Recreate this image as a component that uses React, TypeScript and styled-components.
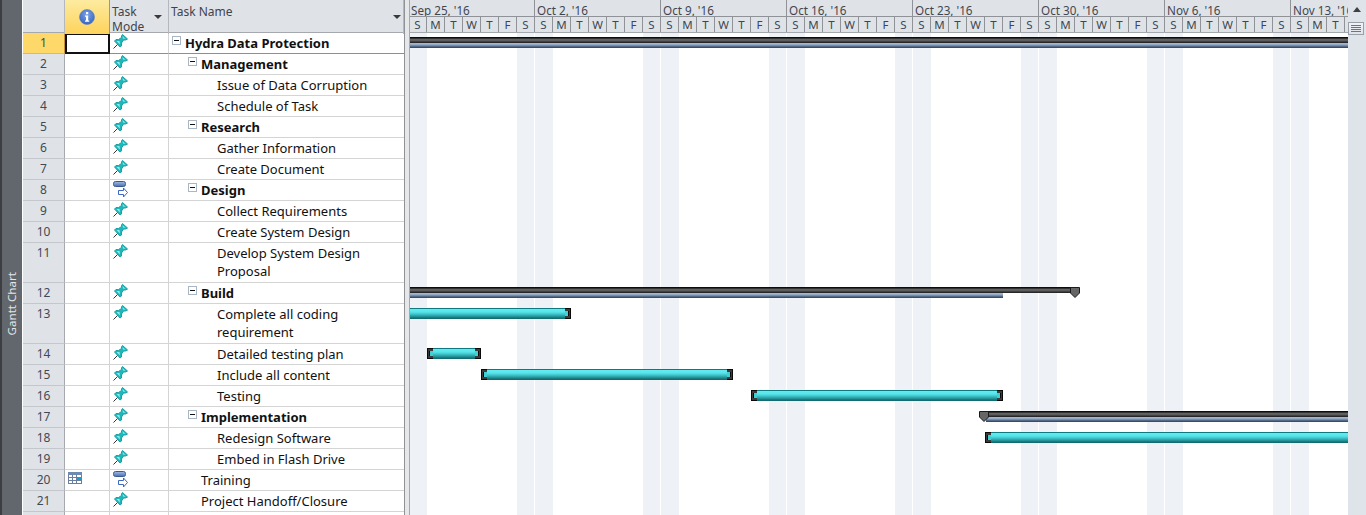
import styled, { createGlobalStyle } from "styled-components";

const GlobalStyle = createGlobalStyle`
  html, body {
    margin: 0;
    height: 100%;
    overflow: hidden;
    background: #fff;
  }
  #root {
    height: 100%;
  }
`;

type TaskRow = {
  id: number;
  name: string;
  level: number;
  summary?: boolean;
  tall?: boolean;
  auto?: boolean;
  calendar?: boolean;
  bold?: boolean;
};

const rows: TaskRow[] = [
  { id: 1, name: "Hydra Data Protection", level: 0, summary: true, bold: true },
  { id: 2, name: "Management", level: 1, summary: true, bold: true },
  { id: 3, name: "Issue of Data Corruption", level: 2 },
  { id: 4, name: "Schedule of Task", level: 2 },
  { id: 5, name: "Research", level: 1, summary: true, bold: true },
  { id: 6, name: "Gather Information", level: 2 },
  { id: 7, name: "Create Document", level: 2 },
  { id: 8, name: "Design", level: 1, summary: true, bold: true, auto: true },
  { id: 9, name: "Collect Requirements", level: 2 },
  { id: 10, name: "Create System Design", level: 2 },
  { id: 11, name: "Develop System Design Proposal", level: 2, tall: true },
  { id: 12, name: "Build", level: 1, summary: true, bold: true },
  { id: 13, name: "Complete all coding requirement", level: 2, tall: true },
  { id: 14, name: "Detailed testing plan", level: 2 },
  { id: 15, name: "Include all content", level: 2 },
  { id: 16, name: "Testing", level: 2 },
  { id: 17, name: "Implementation", level: 1, summary: true, bold: true },
  { id: 18, name: "Redesign Software", level: 2 },
  { id: 19, name: "Embed in Flash Drive", level: 2 },
  { id: 20, name: "Training", level: 1, auto: true, calendar: true },
  { id: 21, name: "Project Handoff/Closure", level: 1 },
  { id: 22, name: "", level: 1 },
];

const weeks = [
  "Sep 25, '16",
  "Oct 2, '16",
  "Oct 9, '16",
  "Oct 16, '16",
  "Oct 23, '16",
  "Oct 30, '16",
  "Nov 6, '16",
  "Nov 13, '16",
];
const dayLetters = ["S", "M", "T", "W", "T", "F", "S"];

const UI_FONT = `"Noto Sans", "Open Sans", "Liberation Sans", sans-serif`;
const COLUMNS = "42px 45px 59px 235px";

const Page = styled.div`
  display: flex;
  width: 1366px;
  height: 515px;
  overflow: hidden;
  font-family: ${UI_FONT};
  font-size: 13px;
  color: #111;
`;

const SideTab = styled.div`
  flex: none;
  width: 22px;
  margin-right: 1px;
  border-left: 2px solid #3c3e42;
  background: #62666d;
  display: flex;
  flex-direction: column;
  align-items: center;
  padding-top: 272px;
  box-sizing: border-box;
`;

const SideLabel = styled.span`
  writing-mode: vertical-rl;
  transform: rotate(180deg);
  color: #e3e6e9;
  font-size: 11.6px;
  line-height: 16px;
`;

const TablePane = styled.div`
  flex: none;
  width: 381px;
  display: flex;
  flex-direction: column;
`;

const HeaderRow = styled.div`
  display: grid;
  grid-template-columns: ${COLUMNS};
  height: 33px;
  flex: none;
  background: #dfe3e8;
  border-bottom: 1px solid #a5a9ad;
  box-sizing: border-box;
`;

const HeaderCell = styled.div<{ $active?: boolean }>`
  position: relative;
  box-sizing: border-box;
  border-right: 1px solid ${(p) => (p.$active ? "#c2923c" : "#b4b7bb")};
  background: ${(p) =>
    p.$active ? "linear-gradient(#fdeb9f, #fdd35c)" : "transparent"};
  display: flex;
  align-items: center;
  justify-content: center;
  color: #3f444a;
  font-size: 12px;
`;

const HeaderText = styled.div`
  flex: 1;
  align-self: flex-start;
  padding: 4px 0 0 2px;
  line-height: 15px;
`;

const FilterArrow = styled.span<{ $right: number }>`
  position: absolute;
  top: 15px;
  right: ${(p) => p.$right}px;
  width: 0;
  height: 0;
  border-left: 4px solid transparent;
  border-right: 4px solid transparent;
  border-top: 4px solid #3a3a3a;
`;

const Row = styled.div<{ $tall?: boolean }>`
  display: grid;
  grid-template-columns: ${COLUMNS};
  flex: none;
  height: ${(p) => (p.$tall ? 40 : 21)}px;
`;

const Cell = styled.div<{ $strong?: boolean }>`
  box-sizing: border-box;
  border-right: 1px solid #d4d4d4;
  border-bottom: 1px solid ${(p) => (p.$strong ? "#8e8e8e" : "#d4d4d4")};
  min-width: 0;
`;

const RowNumber = styled(Cell)<{ $active?: boolean }>`
  background: ${(p) => (p.$active ? "#fed868" : "#dfe3e8")};
  border-right-color: ${(p) => (p.$active ? "#c2923c" : "#a5a9ad")};
  border-bottom-color: ${(p) => (p.$active ? "#e6b84e" : "#c3c6ca")};
  color: #3f4a55;
  text-align: center;
  font-size: 12px;
  line-height: 20px;
`;

const IndicatorCell = styled(Cell)<{ $selected?: boolean }>`
  ${(p) => p.$selected && "border: 2px solid #111;"}
  padding: 2px 0 0 3px;
`;

const ModeCell = styled(Cell)`
  padding: 1px 0 0 2px;
`;

const NameCell = styled(Cell)<{ $level: number; $bold?: boolean }>`
  display: flex;
  align-items: flex-start;
  padding: 1px 34px 0 ${(p) => [3, 19, 48][p.$level]}px;
  font-weight: ${(p) => (p.$bold ? 700 : 400)};
  line-height: 18px;
  border-right: 0;
`;

const NameText = styled.span<{ $inset: boolean }>`
  padding-left: ${(p) => (p.$inset ? 13 : 0)}px;
`;

const Toggle = styled.span`
  flex: none;
  position: relative;
  width: 9px;
  height: 9px;
  margin: 2px 4px 0 0;
  box-sizing: border-box;
  border: 1px solid #a9b6c6;
  background: #fff;
  &::after {
    content: "";
    position: absolute;
    left: 1px;
    right: 1px;
    top: 3px;
    height: 1px;
    background: #111;
  }
`;

const Splitter = styled.div`
  flex: none;
  position: relative;
  z-index: 1;
  width: 6px;
  margin-right: -1px;
  box-sizing: border-box;
  background: #e6e7e9;
  border-left: 1px solid #8f9296;
  border-right: 1px solid #a6a8ab;
`;

const ChartPane = styled.div`
  flex: 1;
  min-width: 0;
  display: flex;
  flex-direction: column;
  position: relative;
  overflow: hidden;
`;

const Timescale = styled.div`
  flex: none;
  height: 33px;
  display: grid;
  grid-template-columns: repeat(8, 126px);
  background: #dfe3e8;
  border-bottom: 1px solid #a5a9ad;
  box-sizing: border-box;
  color: #3f4650;
`;

const Week = styled.div`
  display: flex;
  flex-direction: column;
  min-width: 0;
`;

const WeekLabel = styled.div`
  height: 17px;
  padding-left: 2px;
  box-sizing: border-box;
  border-right: 1px solid #8f9296;
  border-bottom: 1px solid #8f9296;
  font-size: 11.7px;
  line-height: 20px;
  white-space: nowrap;
  overflow: hidden;
`;

const DayRow = styled.div`
  display: grid;
  grid-template-columns: repeat(7, 18px);
  height: 15px;
`;

const Day = styled.div`
  box-sizing: border-box;
  border-right: 1px solid #8f9296;
  text-align: center;
  font-size: 11.5px;
  line-height: 15px;
`;

const Canvas = styled.div`
  flex: 1;
  display: grid;
  grid-template-columns: repeat(8, 126px);
  background: #fff;
`;

const WeekBand = styled.div`
  display: grid;
  grid-template-columns: 18px 90px 17px 1px;
`;

const NonWorking = styled.div<{ $on: boolean }>`
  background: ${(p) => (p.$on ? "#eef1f6" : "transparent")};
`;

const Bar = styled.div<{ $left: number; $top: number; $width: number }>`
  position: absolute;
  left: ${(p) => p.$left}px;
  top: ${(p) => p.$top}px;
  width: ${(p) => p.$width}px;
  height: 11px;
  background: linear-gradient(
    #0e7a80 0,
    #0e7a80 1px,
    #63ecf2 1px,
    #58e4ea 4px,
    #3fc6cc 6px,
    #2a9ea3 8px,
    #146f74 10px,
    #0f6a6f 11px
  );
`;

const BarCap = styled.span<{ $side: "left" | "right" }>`
  position: absolute;
  top: 0;
  ${(p) => p.$side}: 0;
  width: 6px;
  height: 11px;
  box-sizing: border-box;
  background: #3a3a3a;
  border: 1px solid #0a0a0a;
  border-${(p) => (p.$side === "left" ? "right" : "left")}: 0;
  &::after {
    content: "";
    position: absolute;
    ${(p) => (p.$side === "left" ? "right: 0;" : "left: 0;")}
    top: 2px;
    width: 3px;
    height: 5px;
    background: #3fd0d6;
    box-shadow: ${(p) => (p.$side === "left" ? "-1px" : "1px")} 0 0 #0a0a0a;
  }
`;

const SummaryBar = styled.div<{ $left: number; $top: number; $width: number }>`
  position: absolute;
  left: ${(p) => p.$left}px;
  top: ${(p) => p.$top}px;
  width: ${(p) => p.$width}px;
  height: 6px;
  background: linear-gradient(#0c0c0c 0, #0c0c0c 1px, #5a5a5a 2px, #6a6a6a 3px, #333 5px, #1c1c1c 6px);
`;

const ProgressBar = styled.div<{ $left: number; $top: number; $width: number }>`
  position: absolute;
  left: ${(p) => p.$left}px;
  top: ${(p) => p.$top}px;
  width: ${(p) => p.$width}px;
  height: 5px;
  background: linear-gradient(#a9bcd6 0, #8ea3c0 2px, #5f7696 3px, #2d3f55 5px);
`;

const Scrollbar = styled.div`
  flex: none;
  width: 18px;
  background: #dfe3ea;
  display: flex;
  flex-direction: column;
  align-items: center;
`;

const ScrollUp = styled.span`
  margin-top: 7px;
  width: 0;
  height: 0;
  border-left: 4px solid transparent;
  border-right: 4px solid transparent;
  border-bottom: 5px solid #3c3f44;
`;

const ScrollThumb = styled.div`
  margin: 10px 2px 0 0;
  width: 16px;
  height: 13px;
  box-sizing: border-box;
  border: 1px solid #9aa0a8;
  background: linear-gradient(#f2f4f7, #dfe3ea);
  display: flex;
  flex-direction: column;
  justify-content: center;
  gap: 1px;
  padding: 0 2px;
`;

const Grip = styled.i`
  display: block;
  height: 1px;
  background: #70757c;
`;

function InfoIcon() {
  return (
    <svg width="16" height="16" viewBox="0 0 16 16">
      <defs>
        <radialGradient id="infoFill" cx="50%" cy="35%" r="70%">
          <stop offset="0" stopColor="#7ea4e6" />
          <stop offset="1" stopColor="#2f5fc0" />
        </radialGradient>
      </defs>
      <circle cx="8" cy="8" r="7.5" fill="url(#infoFill)" stroke="#5d7fbf" strokeWidth="0.6" />
      <rect x="7" y="3" width="2.2" height="2.2" fill="#fff" />
      <path d="M6 6.5h3.2v5h1v1.2H6v-1.2h1V7.7H6z" fill="#fff" />
    </svg>
  );
}

function PinIcon() {
  return (
    <svg width="16" height="16" viewBox="0 0 16 16" style={{ display: "block" }}>
      <path d="M1.5 14.5 L6 10" stroke="#333" strokeWidth="1" />
      <path
        d="M10.5 0.5 L15.5 5 L13.5 6 L11.5 6 L9.5 9 L9.5 12 L8 13 L2.5 7 L4 5.5 L6.5 5.5 L9.5 3.5 L9.5 2 Z"
        fill="#1fb8ba"
        stroke="#1f9fa3"
        strokeWidth="1"
        strokeLinejoin="round"
      />
      <path d="M10.5 2 L13.5 5 L11 4.5 Z M4.5 7 L7.5 7 L8 10.5 Z" fill="#8ceded" />
    </svg>
  );
}

function AutoIcon() {
  return (
    <svg width="16" height="18" viewBox="0 0 16 18" style={{ display: "block" }}>
      <defs>
        <linearGradient id="autoBar" x1="0" y1="0" x2="0" y2="1">
          <stop offset="0" stopColor="#a3bde6" />
          <stop offset="1" stopColor="#4a6fb0" />
        </linearGradient>
      </defs>
      <rect x="1.5" y="0.5" width="12" height="5" rx="2" fill="url(#autoBar)" stroke="#3b5a90" />
      <path d="M6.5 9.5 H11.5 V7 L15.5 11.5 L11.5 16 V13.5 H6.5 Z" fill="#fff" stroke="#3b66c4" />
    </svg>
  );
}

function CalendarIcon() {
  return (
    <svg width="14" height="12" viewBox="0 0 14 12" style={{ display: "block" }}>
      <rect x="0.5" y="0.5" width="13" height="11" fill="#fff" stroke="#6a7fa0" />
      <rect x="0" y="0" width="14" height="3" fill="#7089b3" />
      <path d="M4.5 3v8M8.5 3v8M1 5.5h12M1 8.5h12" stroke="#6a7fa0" />
      <rect x="9" y="6" width="4" height="2" fill="#1b9ad0" />
    </svg>
  );
}

function TaskBar({ left, top, width, clipLeft, clipRight }: { left: number; top: number; width: number; clipLeft?: boolean; clipRight?: boolean }) {
  return (
    <Bar $left={left} $top={top} $width={width}>
      {!clipLeft && <BarCap $side="left" />}
      {!clipRight && <BarCap $side="right" />}
    </Bar>
  );
}

function SummaryCap({ left, top }: { left: number; top: number }) {
  return (
    <svg
      width="10"
      height="11"
      viewBox="0 0 10 11"
      style={{ position: "absolute", left, top }}
    >
      <path d="M0.5 0.5 H9.5 V6 L5 10.5 L0.5 6 Z" fill="#666" stroke="#1a1a1a" />
    </svg>
  );
}

export default function App() {
  return (
    <Page>
      <GlobalStyle />
      <SideTab>
        <SideLabel>Gantt Chart</SideLabel>
      </SideTab>
      <TablePane>
        <HeaderRow>
          <HeaderCell />
          <HeaderCell $active>
            <InfoIcon />
          </HeaderCell>
          <HeaderCell>
            <HeaderText>Task Mode</HeaderText>
            <FilterArrow $right={6} />
          </HeaderCell>
          <HeaderCell>
            <HeaderText>Task Name</HeaderText>
            <FilterArrow $right={2} />
          </HeaderCell>
        </HeaderRow>
        {rows.map((row) => (
          <Row key={row.id} $tall={row.tall}>
            <RowNumber $active={row.id === 1}>{row.name && row.id}</RowNumber>
            <IndicatorCell $selected={row.id === 1} $strong={row.id === 1}>
              {row.calendar && <CalendarIcon />}
            </IndicatorCell>
            <ModeCell $strong={row.id === 1}>
              {row.name && (row.auto ? <AutoIcon /> : <PinIcon />)}
            </ModeCell>
            <NameCell $level={row.level} $bold={row.bold} $strong={row.id === 1}>
              {row.summary && <Toggle />}
              <NameText $inset={!row.summary && row.level === 1}>{row.name}</NameText>
            </NameCell>
          </Row>
        ))}
      </TablePane>
      <Splitter />
      <ChartPane>
        <Timescale>
          {weeks.map((week) => (
            <Week key={week}>
              <WeekLabel>{week}</WeekLabel>
              <DayRow>
                {dayLetters.map((d, i) => (
                  <Day key={i}>{d}</Day>
                ))}
              </DayRow>
            </Week>
          ))}
        </Timescale>
        <Canvas>
          {weeks.map((week) => (
            <WeekBand key={week}>
              <NonWorking $on />
              <NonWorking $on={false} />
              <NonWorking $on />
              <NonWorking $on={false} />
            </WeekBand>
          ))}
        </Canvas>

        <SummaryBar $left={0} $top={37} $width={939} />
        <ProgressBar $left={0} $top={43} $width={939} />

        <SummaryBar $left={0} $top={287} $width={668} />
        <ProgressBar $left={0} $top={293} $width={594} />
        <SummaryCap left={661} top={287} />

        <TaskBar left={-10} top={308} width={172} clipLeft />
        <TaskBar left={18} top={348} width={54} />
        <TaskBar left={72} top={369} width={252} />
        <TaskBar left={342} top={390} width={252} />

        <SummaryBar $left={572} $top={411} $width={400} />
        <ProgressBar $left={577} $top={417} $width={400} />
        <SummaryCap left={570} top={411} />
        <TaskBar left={576} top={432} width={400} clipRight />
      </ChartPane>
      <Scrollbar>
        <ScrollUp />
        <ScrollThumb>
          <Grip />
          <Grip />
          <Grip />
          <Grip />
        </ScrollThumb>
      </Scrollbar>
    </Page>
  );
}
